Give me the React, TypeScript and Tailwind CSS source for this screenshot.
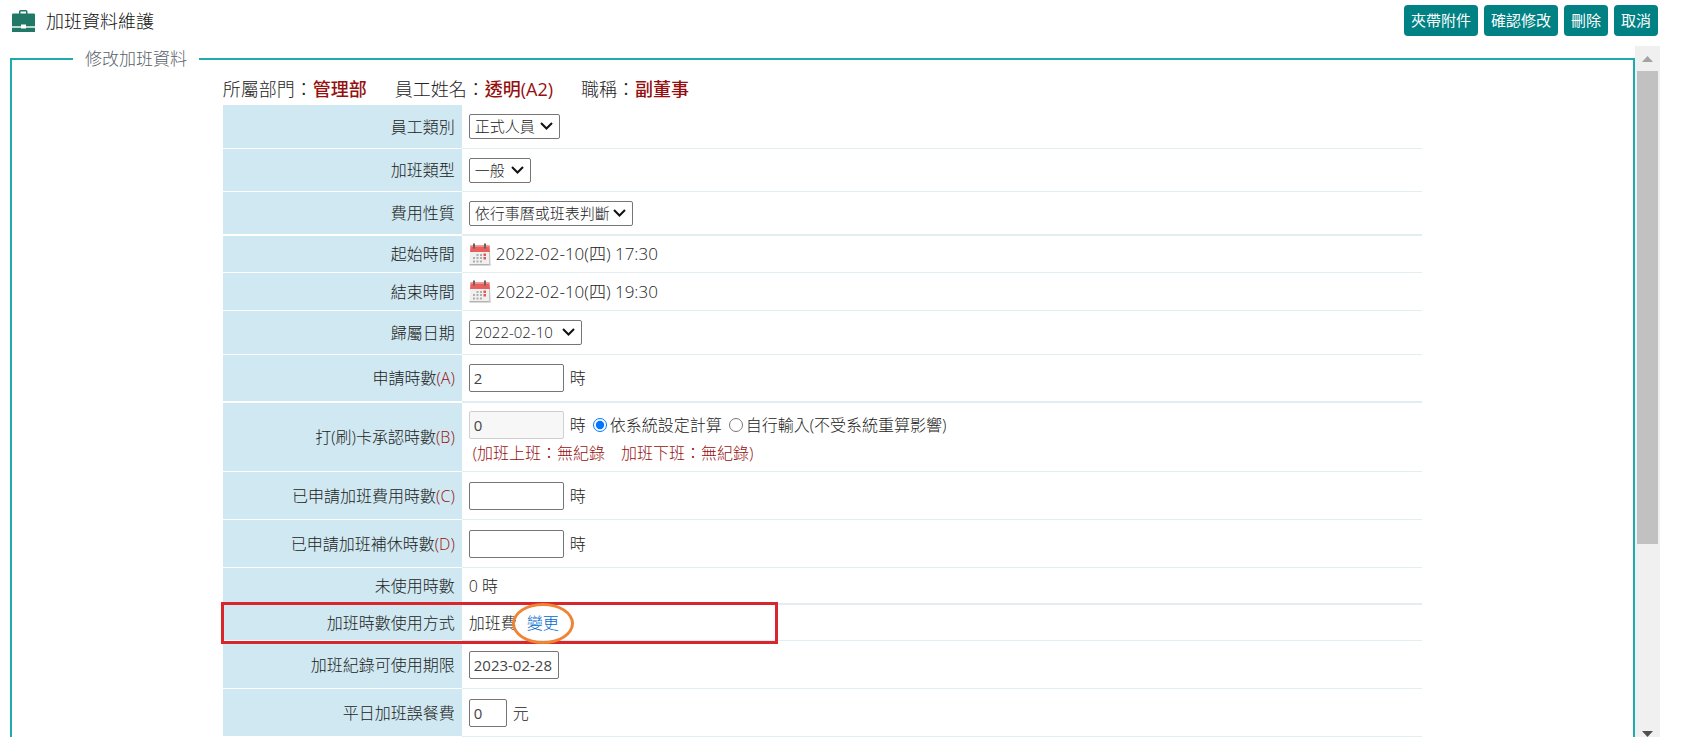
import type { ReactNode } from 'react'

const buttons = ['夾帶附件', '確認修改', '刪除', '取消']

function BriefcaseIcon() {
  return (
    <svg width="23" height="22" viewBox="0 0 23 22" fill="#217867" aria-hidden="true">
      <path d="M7 4V1.500Q7 0 8.500 0h5.500Q15.500 0 15.500 1.500V4H14V1.500H8.500V4z" />
      <path d="M1 3.500h21Q23 3.500 23 4.500V16H0V4.500Q0 3.500 1 3.500z" />
      <path d="M0 18h23v4H0z" />
      <path d="M0 16h23v2H0z" fill="#b9d9d2" />
      <path d="M9 14.500h5v4H9z" fill="#fff" />
    </svg>
  )
}

function CalendarIcon() {
  return (
    <svg width="22" height="23" viewBox="0 0 22 23" aria-hidden="true">
      <path d="M1 8h20l.5 14H.5z" fill="#f1f0f0" />
      <path d="M.5 21h21v1.500H.5z" fill="#b5b2b2" />
      <path d="M20 8h1l.5 14H20z" fill="#c9c6c6" />
      <path d="M1.500 2.500h19L21 9H1z" fill="#e8605c" />
      <path d="M1.500 2.500h19v1.500h-19z" fill="#f08b86" />
      <path d="M4 .5h2v5H4zM15 .5h2v5h-2z" fill="#6b5f61" />
      <path
        d="M7.500 11h2v2h-2zM11 11h2v2h-2zM4 14h2v2H4zM7.500 14h2v2h-2zM11 14h2v2h-2zM4 17.500h2v2H4zM7.500 17.500h2v2h-2zM11 17.500h2v2h-2z"
        fill="#b0adb0"
      />
      <path d="M14.500 10.500H17V13h-2.500zM14.500 14H17v2.500h-2.500z" fill="#df5a57" />
    </svg>
  )
}

function Select({ id, value, width }: { id: string; value: string; width: string }) {
  return (
    <span className={`relative inline-flex ${width}`}>
      <select
        id={id}
        className="h-[25px] w-full appearance-none rounded-xs border border-[#767676] bg-white pl-[5px] pr-5 text-[15px] leading-[23px] text-[#222]"
      >
        <option>{value}</option>
      </select>
      <svg
        width="13"
        height="8"
        viewBox="0 0 13 8"
        fill="none"
        stroke="#111"
        strokeWidth="2"
        className="pointer-events-none absolute right-[7px] top-2"
        aria-hidden="true"
      >
        <path d="M1 1l5.500 5.500L12 1" />
      </svg>
    </span>
  )
}

function TextBox({
  id,
  value = '',
  width = 'w-[95px]',
  unit,
  disabled,
}: {
  id: string
  value?: string
  width?: string
  unit?: string
  disabled?: boolean
}) {
  return (
    <>
      <input
        id={id}
        type="text"
        defaultValue={value}
        disabled={disabled}
        className={`h-7 rounded-xs border border-[#767676] bg-white px-1 text-[15px] font-normal text-[#444] disabled:border-[#cfcfcf] disabled:bg-[#f7f7f7] ${width}`}
      />
      {unit && <span className="ml-1.5">{unit}</span>}
    </>
  )
}

function Row({
  label,
  code,
  htmlFor,
  height = 'h-12',
  line = 'border-b',
  marked,
  children,
}: {
  label: string
  code?: string
  htmlFor?: string
  height?: string
  line?: string
  marked?: boolean
  children: ReactNode
}) {
  return (
    <tr className={height}>
      <th
        scope="row"
        className={`relative w-[239px] border-white bg-[#cfe8f1] pr-[7px] text-right font-light ${line}`}
      >
        <label htmlFor={htmlFor}>
          {label}
          {code && <span className="text-[#960f0f]">({code})</span>}
        </label>
        {marked && (
          <span className="pointer-events-none absolute -left-0.5 -top-[3px] z-10 h-[42px] w-[557px] border-[3px] border-[#d8262c]" />
        )}
      </th>
      <td className={`border-[#e2edf1] pl-[7px] ${line}`}>
        <div className="flex items-center">{children}</div>
      </td>
    </tr>
  )
}

function OvertimeForm() {
  return (
    <fieldset className="min-w-0 flex-1 self-stretch border-2 border-b-0 border-[#1dabb0]">
      <legend className="ml-[61px] px-3 text-[17px] leading-[26px] text-[#596169]">
        修改加班資料
      </legend>
      <div className="mx-auto w-[74%]">
        <div className="flex h-[33px] items-center gap-7 text-lg">
          <p>
            所屬部門：<b className="font-medium text-[#960f0f]">管理部</b>
          </p>
          <p>
            員工姓名：<b className="font-medium text-[#960f0f]">透明(A2)</b>
          </p>
          <p>
            職稱：<b className="font-medium text-[#960f0f]">副董事</b>
          </p>
        </div>
        <table className="w-full table-fixed border-separate border-spacing-0 leading-5">
          <tbody>
            <Row label="員工類別" htmlFor="empType" height="h-11">
              <Select id="empType" value="正式人員" width="w-[91px]" />
            </Row>
            <Row label="加班類型" htmlFor="otType" height="h-[43px]">
              <Select id="otType" value="一般" width="w-[62px]" />
            </Row>
            <Row label="費用性質" htmlFor="feeType" height="h-11" line="border-b-2">
              <Select id="feeType" value="依行事曆或班表判斷" width="w-[164px]" />
            </Row>
            <Row label="起始時間" height="h-[37px]">
              <CalendarIcon />
              <span className="ml-[5px] text-[17px]">2022-02-10(四) 17:30</span>
            </Row>
            <Row label="結束時間" height="h-[38px]">
              <CalendarIcon />
              <span className="ml-[5px] text-[17px]">2022-02-10(四) 19:30</span>
            </Row>
            <Row label="歸屬日期" htmlFor="belongDate" height="h-11">
              <Select id="belongDate" value="2022-02-10" width="w-[113px]" />
            </Row>
            <Row label="申請時數" code="A" htmlFor="hoursA" line="border-b-2">
              <TextBox id="hoursA" value="2" unit="時" />
            </Row>
            <Row label="打(刷)卡承認時數" code="B" htmlFor="hoursB" height="h-[69px]">
              <div>
                <div className="flex items-center">
                  <TextBox id="hoursB" value="0" unit="時" disabled />
                  <label className="ml-[7px] flex items-center gap-[3px]">
                    <input type="radio" name="calc" defaultChecked className="size-3.5" />
                    依系統設定計算
                  </label>
                  <label className="ml-[7px] flex items-center gap-[3px]">
                    <input type="radio" name="calc" className="size-3.5" />
                    自行輸入(不受系統重算影響)
                  </label>
                </div>
                <p className="mt-1 pl-1 text-[#960f0f]">(加班上班：無紀錄　加班下班：無紀錄)</p>
              </div>
            </Row>
            <Row label="已申請加班費用時數" code="C" htmlFor="hoursC">
              <TextBox id="hoursC" unit="時" />
            </Row>
            <Row label="已申請加班補休時數" code="D" htmlFor="hoursD">
              <TextBox id="hoursD" unit="時" />
            </Row>
            <Row label="未使用時數" height="h-[37px]" line="border-b-2">
              0 時
            </Row>
            <Row label="加班時數使用方式" height="h-9" marked>
              加班費
              <span className="relative ml-2.5">
                <a href="#change" className="text-[#0068cc]">
                  變更
                </a>
                <span className="pointer-events-none absolute -inset-x-[15px] -top-2.5 z-20 h-[41px] rounded-[50%] border-[3px] border-[#ee8434]" />
              </span>
            </Row>
            <Row label="加班紀錄可使用期限" htmlFor="expire">
              <TextBox id="expire" value="2023-02-28" width="w-[90px]" />
            </Row>
            <Row label="平日加班誤餐費" htmlFor="meal">
              <TextBox id="meal" value="0" width="w-[38px]" unit="元" />
            </Row>
          </tbody>
        </table>
      </div>
    </fieldset>
  )
}

function ScrollTrack() {
  return (
    <div className="flex w-[25px] shrink-0 flex-col items-center bg-[#f0f0f0]" aria-hidden="true">
      <svg width="25" height="25" viewBox="0 0 25 25" className="shrink-0">
        <path d="M7 16l5.500-6 5.500 6z" fill="#a3a3a3" />
      </svg>
      <div className="min-h-0 w-[21px] flex-[473] bg-[#c1c1c1]" />
      <div className="flex-[187]" />
      <svg width="25" height="6" viewBox="0 0 25 6" className="shrink-0">
        <path d="M7 0h11l-5.500 6z" fill="#505050" />
      </svg>
    </div>
  )
}

export default function App() {
  return (
    <div
      lang="zh-Hant"
      className="flex h-screen flex-col overflow-hidden bg-white font-['Open_Sans','Noto_Sans_CJK_TC',sans-serif] text-base font-light text-[#222]"
    >
      <header className="flex h-[46px] shrink-0 items-start justify-between pl-3 pr-6 pt-[5px]">
        <div className="flex h-[31px] items-center gap-[11px]">
          <BriefcaseIcon />
          <h1 className="text-lg font-light text-[#111]">加班資料維護</h1>
        </div>
        <div className="flex gap-1.5">
          {buttons.map((text) => (
            <button
              key={text}
              type="button"
              className="h-[31px] rounded bg-[#008184] px-[7px] text-[15px] font-normal text-white"
            >
              {text}
            </button>
          ))}
        </div>
      </header>
      <main className="flex min-h-0 flex-1 pl-2.5 pr-[22px]">
        <OvertimeForm />
        <ScrollTrack />
      </main>
    </div>
  )
}
